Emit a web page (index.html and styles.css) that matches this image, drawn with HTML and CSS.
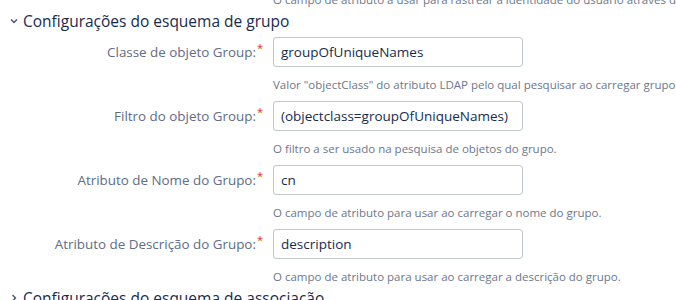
FILE: index.html
```html
<!DOCTYPE html>
<html>
<head>
    <meta charset="UTF-8">
    <title>Configurações LDAP</title>
    <link rel="stylesheet" href="styles.css">
</head>
<body>

<div class="page">
    <div class="field field-tail">
        <div class="field-label"></div>
        <div class="field-body">
            <div class="desc">O campo de atributo a usar para rastrear a identidade do usuário através de alterações de nome.</div>
        </div>
    </div>

    <section class="group">
        <h3 class="group-title">
            <svg class="chevron" width="10" height="10" viewBox="0 0 10 10"><path d="M2 3.5 L5 6.5 L8 3.5" fill="none" stroke="#42526e" stroke-width="1.4"/></svg>
            Configurações do esquema de grupo
        </h3>

        <div class="field">
            <label class="field-label" for="groupClass">Classe de objeto Group:<span class="req">*</span></label>
            <div class="field-body">
                <input id="groupClass" class="text" type="text" value="groupOfUniqueNames">
                <div class="desc">Valor "objectClass" do atributo LDAP pelo qual pesquisar ao carregar grupos.</div>
            </div>
        </div>

        <div class="field">
            <label class="field-label" for="groupFilter">Filtro do objeto Group:<span class="req">*</span></label>
            <div class="field-body">
                <input id="groupFilter" class="text" type="text" value="(objectclass=groupOfUniqueNames)">
                <div class="desc">O filtro a ser usado na pesquisa de objetos do grupo.</div>
            </div>
        </div>

        <div class="field">
            <label class="field-label" for="groupName">Atributo de Nome do Grupo:<span class="req">*</span></label>
            <div class="field-body">
                <input id="groupName" class="text" type="text" value="cn">
                <div class="desc">O campo de atributo para usar ao carregar o nome do grupo.</div>
            </div>
        </div>

        <div class="field">
            <label class="field-label" for="groupDesc">Atributo de Descrição do Grupo:<span class="req">*</span></label>
            <div class="field-body">
                <input id="groupDesc" class="text" type="text" value="description">
                <div class="desc">O campo de atributo para usar ao carregar a descrição do grupo.</div>
            </div>
        </div>
    </section>

    <section class="group">
        <h3 class="group-title">
            <svg class="chevron" width="10" height="10" viewBox="0 0 10 10"><path d="M3.5 2 L6.5 5 L3.5 8" fill="none" stroke="#42526e" stroke-width="1.4"/></svg>
            Configurações do esquema de associação
        </h3>
    </section>
</div>

</body>
</html>
```

FILE: styles.css
```css
html, body {
    overflow: hidden;
}

body {
    margin: 0;
    background: #fff;
    font-family: "Open Sans", "Noto Sans", sans-serif;
    color: #172b4d;
}

.page {
    margin-top: -8px;
}

.group-title {
    display: flex;
    align-items: center;
    gap: 4px;
    margin: 2px 0 5px;
    padding-left: 9px;
    font-size: 15.5px;
    font-weight: normal;
    line-height: 22px;
    color: #172b4d;
}

.chevron {
    flex: none;
}

.field {
    display: grid;
    grid-template-columns: 263px 250px;
    column-gap: 10px;
}

.field + .field {
    margin-top: 8px;
}

.field-label {
    padding-top: 6px;
    text-align: right;
    font-size: 13.4px;
    line-height: 18px;
    color: #5e6c84;
    white-space: nowrap;
}

.req {
    position: relative;
    top: -5px;
    margin-left: 1px;
    font-size: 11px;
    color: #de350b;
}

.text {
    display: block;
    box-sizing: border-box;
    width: 250px;
    height: 30px;
    padding: 0 7px;
    border: 1px solid #c1c7d0;
    border-radius: 3px;
    font-family: inherit;
    font-size: 13.5px;
    color: #172b4d;
    background: #fff;
}

.desc {
    margin-top: 10px;
    font-size: 11.5px;
    line-height: 16px;
    color: #6b778c;
    white-space: nowrap;
}

.field-tail .desc {
    margin-top: 0;
}
```
